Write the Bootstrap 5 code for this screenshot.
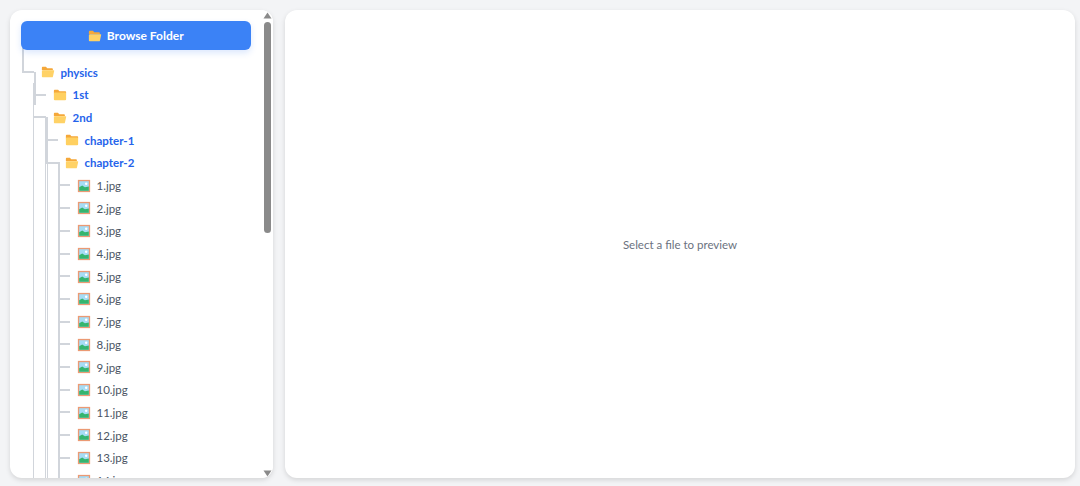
<!doctype html>
<html lang="en"><head><meta charset="utf-8">
<link rel="stylesheet" href="https://cdn.jsdelivr.net/npm/bootstrap@5.3.0/dist/css/bootstrap.min.css">
<style>
html,body{height:100%;overflow:hidden}
body{background:#f3f4f6;font-family:Lato,"Noto Sans",sans-serif;font-size:11.5px}
.shell{height:486px;padding:10px 5px 8px 10px;gap:12px}
.pane{background:#fff;border-radius:12px;box-shadow:0 2px 5px rgba(0,0,0,.13);overflow:hidden}
.side{width:263px;flex:none}
.treebox{flex:1;min-width:0;padding:11px 0 0 11.5px;overflow:hidden;line-height:1}
.browse{height:29px;width:229.500px;margin-left:-.5px;background:#3b82f6;color:#fff;font-weight:700;font-size:12px;border:0;border-radius:6px;box-shadow:0 3px 6px rgba(59,130,246,.18);gap:5px;position:relative;z-index:2;padding:1px 0 0}
.browse:hover{background:#3b82f6;color:#fff}
.ic{width:14px;height:14px;flex:none}
.tl,.tl ul{list-style:none;margin:0;padding:0}
.tl{padding-left:12px;padding-top:11px;position:relative}
.tl ul{padding-left:12px;position:relative}
.tl li{position:relative}
.rw{height:22.700px;gap:6px;padding-left:7px;color:#4b5563;white-space:nowrap}
.dirn{color:#2563eb;font-weight:700}
.tl::before{content:"";position:absolute;left:0;top:-11px;width:2px;height:33px;background:#d1d5db}
.rw::before{content:"";position:absolute;left:-12px;width:12px;top:10px;height:2px;background:#d1d5db}
.lv1::before,.lv2::before,.lv3::before{content:"";position:absolute;bottom:0}
.lv1::before{left:-.5px;top:-1px;width:1px;background:#d1d5db}
.lv1::after{content:"";position:absolute;left:.5px;top:-12px;width:2px;height:33px;background:#d1d5db}
.lv2::before{left:-.5px;top:-12px;width:3px;border-left:1px solid #d1d5db;border-right:1px solid #d1d5db}
.lv2::after{content:"";position:absolute;left:.5px;top:-12px;width:2px;height:46px;background:#d1d5db}
.lv3::before{left:.5px;top:-12px;width:2px;background:#d1d5db}
.sbar{width:11px;flex:none;background:#fff;padding:2px 0 1px}
.arr{height:8px;color:#8a8a8a}
.thumb{width:7px;height:211px;background:#8a8a8a;border-radius:4px;margin:2px auto 0}
.msg{color:#6b7280;font-size:11.5px;padding-top:2px}
</style></head><body>
<div class="shell d-flex">
 <aside class="pane side d-flex">
  <div class="treebox">
   <button class="btn browse d-flex align-items-center justify-content-center"><svg class="ic" viewBox="0 0 16 16"><use href="#fo"/></svg>Browse Folder</button>
   <ul class="tl">
    <li><div class="rw d-flex align-items-center"><svg class="ic" viewBox="0 0 16 16"><use href="#fo"/></svg><span class="dirn">physics</span></div>
     <ul class="lv1">
      <li><div class="rw d-flex align-items-center"><svg class="ic" viewBox="0 0 16 16"><use href="#fc"/></svg><span class="dirn">1st</span></div></li>
      <li><div class="rw d-flex align-items-center"><svg class="ic" viewBox="0 0 16 16"><use href="#fo"/></svg><span class="dirn">2nd</span></div>
       <ul class="lv2">
        <li><div class="rw d-flex align-items-center"><svg class="ic" viewBox="0 0 16 16"><use href="#fc"/></svg><span class="dirn">chapter-1</span></div></li>
        <li><div class="rw d-flex align-items-center"><svg class="ic" viewBox="0 0 16 16"><use href="#fo"/></svg><span class="dirn">chapter-2</span></div>
         <ul class="lv3">
          <li><div class="rw d-flex align-items-center"><svg class="ic" viewBox="0 0 16 16"><use href="#im"/></svg><span>1.jpg</span></div></li>
          <li><div class="rw d-flex align-items-center"><svg class="ic" viewBox="0 0 16 16"><use href="#im"/></svg><span>2.jpg</span></div></li>
          <li><div class="rw d-flex align-items-center"><svg class="ic" viewBox="0 0 16 16"><use href="#im"/></svg><span>3.jpg</span></div></li>
          <li><div class="rw d-flex align-items-center"><svg class="ic" viewBox="0 0 16 16"><use href="#im"/></svg><span>4.jpg</span></div></li>
          <li><div class="rw d-flex align-items-center"><svg class="ic" viewBox="0 0 16 16"><use href="#im"/></svg><span>5.jpg</span></div></li>
          <li><div class="rw d-flex align-items-center"><svg class="ic" viewBox="0 0 16 16"><use href="#im"/></svg><span>6.jpg</span></div></li>
          <li><div class="rw d-flex align-items-center"><svg class="ic" viewBox="0 0 16 16"><use href="#im"/></svg><span>7.jpg</span></div></li>
          <li><div class="rw d-flex align-items-center"><svg class="ic" viewBox="0 0 16 16"><use href="#im"/></svg><span>8.jpg</span></div></li>
          <li><div class="rw d-flex align-items-center"><svg class="ic" viewBox="0 0 16 16"><use href="#im"/></svg><span>9.jpg</span></div></li>
          <li><div class="rw d-flex align-items-center"><svg class="ic" viewBox="0 0 16 16"><use href="#im"/></svg><span>10.jpg</span></div></li>
          <li><div class="rw d-flex align-items-center"><svg class="ic" viewBox="0 0 16 16"><use href="#im"/></svg><span>11.jpg</span></div></li>
          <li><div class="rw d-flex align-items-center"><svg class="ic" viewBox="0 0 16 16"><use href="#im"/></svg><span>12.jpg</span></div></li>
          <li><div class="rw d-flex align-items-center"><svg class="ic" viewBox="0 0 16 16"><use href="#im"/></svg><span>13.jpg</span></div></li>
          <li><div class="rw d-flex align-items-center"><svg class="ic" viewBox="0 0 16 16"><use href="#im"/></svg><span>14.jpg</span></div></li>
         </ul></li>
       </ul></li>
     </ul></li>
   </ul>
  </div>
  <div class="sbar d-flex flex-column">
   <svg class="arr w-100" viewBox="0 0 11 8"><path d="M5.500 .5 9.500 6.500h-8z" fill="currentColor"/></svg>
   <div class="thumb"></div>
   <svg class="arr w-100 mt-auto" viewBox="0 0 11 8"><path d="M5.500 7.500 9.500 1.500h-8z" fill="currentColor"/></svg>
  </div>
 </aside>
 <main class="pane flex-fill d-flex align-items-center justify-content-center"><span class="msg">Select a file to preview</span></main>
</div>
<svg width="0" height="0" class="position-absolute"><defs>
<g id="fo"><path d="M1 3.200C1 2.500 1.500 2 2.200 2h3.400l1.600 1.800h5.200c.7 0 1.200.5 1.200 1.200v1H1z" fill="#f5a83a"/><path d="M2.400 6h12.200c.4 0 .6.3.5.7l-1.400 6.300c-.1.6-.6 1-1.200 1H2.200C1.500 14 1 13.500 1 12.800V7.500C1 6.700 1.600 6 2.400 6z" fill="#ffd266"/></g>
<g id="fc"><path d="M1 3.200C1 2.500 1.500 2 2.200 2h3.600l1.600 1.700h6.400c.7 0 1.200.5 1.200 1.200V6H1z" fill="#f5a83a"/><rect x="1" y="5" width="14" height="9" rx="1.200" fill="#ffd060"/></g>
<g id="im"><rect x="1" y="1" width="14" height="14" fill="#eb9a74"/><rect x="2.500" y="2.500" width="11" height="11" fill="#a6dcf5"/><circle cx="10.500" cy="5.500" r="1.400" fill="#fff"/><path d="M2.500 13.500V9.500L6 7.500 9 9.500l4.500-1v5z" fill="#35b56f"/></g>
</defs></svg>
<script src="https://cdn.jsdelivr.net/npm/bootstrap@5.3.0/dist/js/bootstrap.bundle.min.js"></script>
</body></html>
